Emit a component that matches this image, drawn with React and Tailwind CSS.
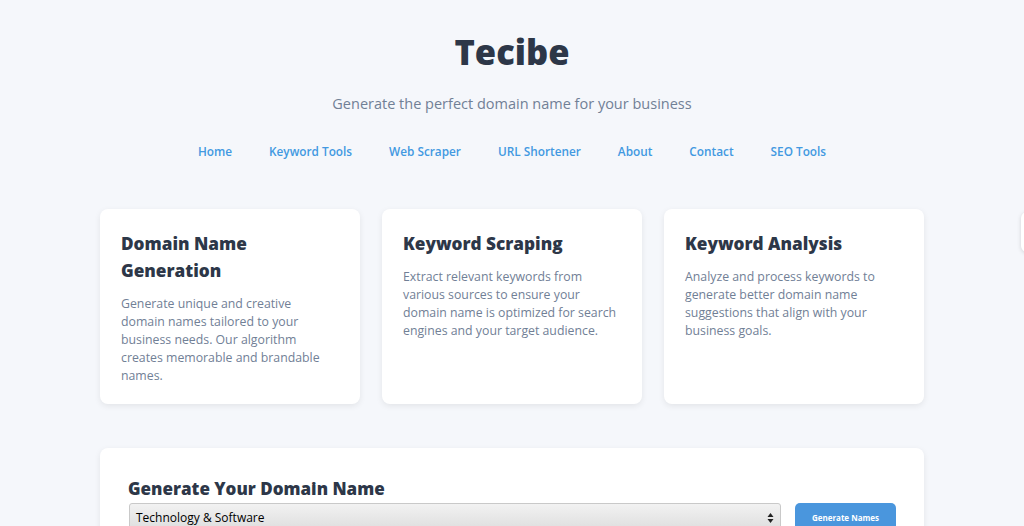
export default function App() {
  const font = { fontFamily: '"Open Sans", "Noto Sans", sans-serif' };
  const nav = ["Home", "Keyword Tools", "Web Scraper", "URL Shortener", "About", "Contact", "SEO Tools"];
  const cards = [
    {
      title: ["Domain Name", "Generation"],
      body: [
        "Generate unique and creative",
        "domain names tailored to your",
        "business needs. Our algorithm",
        "creates memorable and brandable",
        "names.",
      ],
    },
    {
      title: ["Keyword Scraping"],
      body: [
        "Extract relevant keywords from",
        "various sources to ensure your",
        "domain name is optimized for search",
        "engines and your target audience.",
      ],
    },
    {
      title: ["Keyword Analysis"],
      body: [
        "Analyze and process keywords to",
        "generate better domain name",
        "suggestions that align with your",
        "business goals.",
      ],
    },
  ];
  return (
    <div className="min-h-[526px] h-[526px] overflow-hidden bg-[#f5f7fb] relative" style={font}>
      <div className="w-[824px] mx-auto pt-[32px]">
        <h1 className="text-center text-[34.5px] leading-[40px] font-extrabold text-[#2d3748]">Tecibe</h1>
        <p className="text-center text-[14.5px] leading-[20px] text-[#718096] mt-[22px]">
          Generate the perfect domain name for your business
        </p>
        <nav className="flex justify-center gap-x-[37px] mt-[28px]">
          {nav.map((n) => (
            <a key={n} className="text-[11.8px] leading-[18px] font-semibold text-[#4299e1] whitespace-nowrap">
              {n}
            </a>
          ))}
        </nav>
        <div className="grid grid-cols-3 gap-[22px] mt-[49px]">
          {cards.map((c, i) => (
            <div key={i} className="bg-white rounded-lg shadow-[0_2px_6px_rgba(0,0,0,0.08)] pt-[21px] px-[21px] pb-[19px]">
              <h2 className="text-[17.2px] leading-[27px] font-extrabold text-[#2d3748]">
                {c.title.map((t) => (
                  <span key={t} className="block whitespace-nowrap">{t}</span>
                ))}
              </h2>
              <p className="mt-[11px] text-[12.3px] leading-[18px] text-[#718096]">
                {c.body.map((t) => (
                  <span key={t} className="block whitespace-nowrap">{t}</span>
                ))}
              </p>
            </div>
          ))}
        </div>
        <div className="mt-[44px] bg-white rounded-lg shadow-[0_2px_6px_rgba(0,0,0,0.08)] pt-[27px] px-[28px] pb-6">
          <h2 className="text-[17px] leading-[27px] font-extrabold text-[#2d3748]">Generate Your Domain Name</h2>
          <div className="flex items-start gap-[14px] mt-[1px]">
            <div className="flex-1 ml-px h-[30px] flex items-center justify-between rounded-[3px] border border-[#c9c9c9] bg-gradient-to-b from-[#f2f2f2] to-[#dcdcdc] pl-[6px] pr-[6px]">
              <span className="text-[12px] text-black">Technology &amp; Software</span>
              <svg width="7" height="12" viewBox="0 0 7 12">
                <path d="M3.5 1 L6.5 5 L0.5 5 Z" fill="#222" />
                <path d="M3.5 11 L6.5 7 L0.5 7 Z" fill="#222" />
              </svg>
            </div>
            <button className="w-[101px] h-[30px] rounded-[5px] bg-[#4a96dd] text-white text-[8px] font-bold">
              Generate Names
            </button>
          </div>
        </div>
      </div>
      <div className="absolute top-[212px] left-[1021px] w-[40px] h-[40px] rounded-md bg-white shadow-[0_1px_4px_rgba(0,0,0,0.15)]" />
    </div>
  );
}
